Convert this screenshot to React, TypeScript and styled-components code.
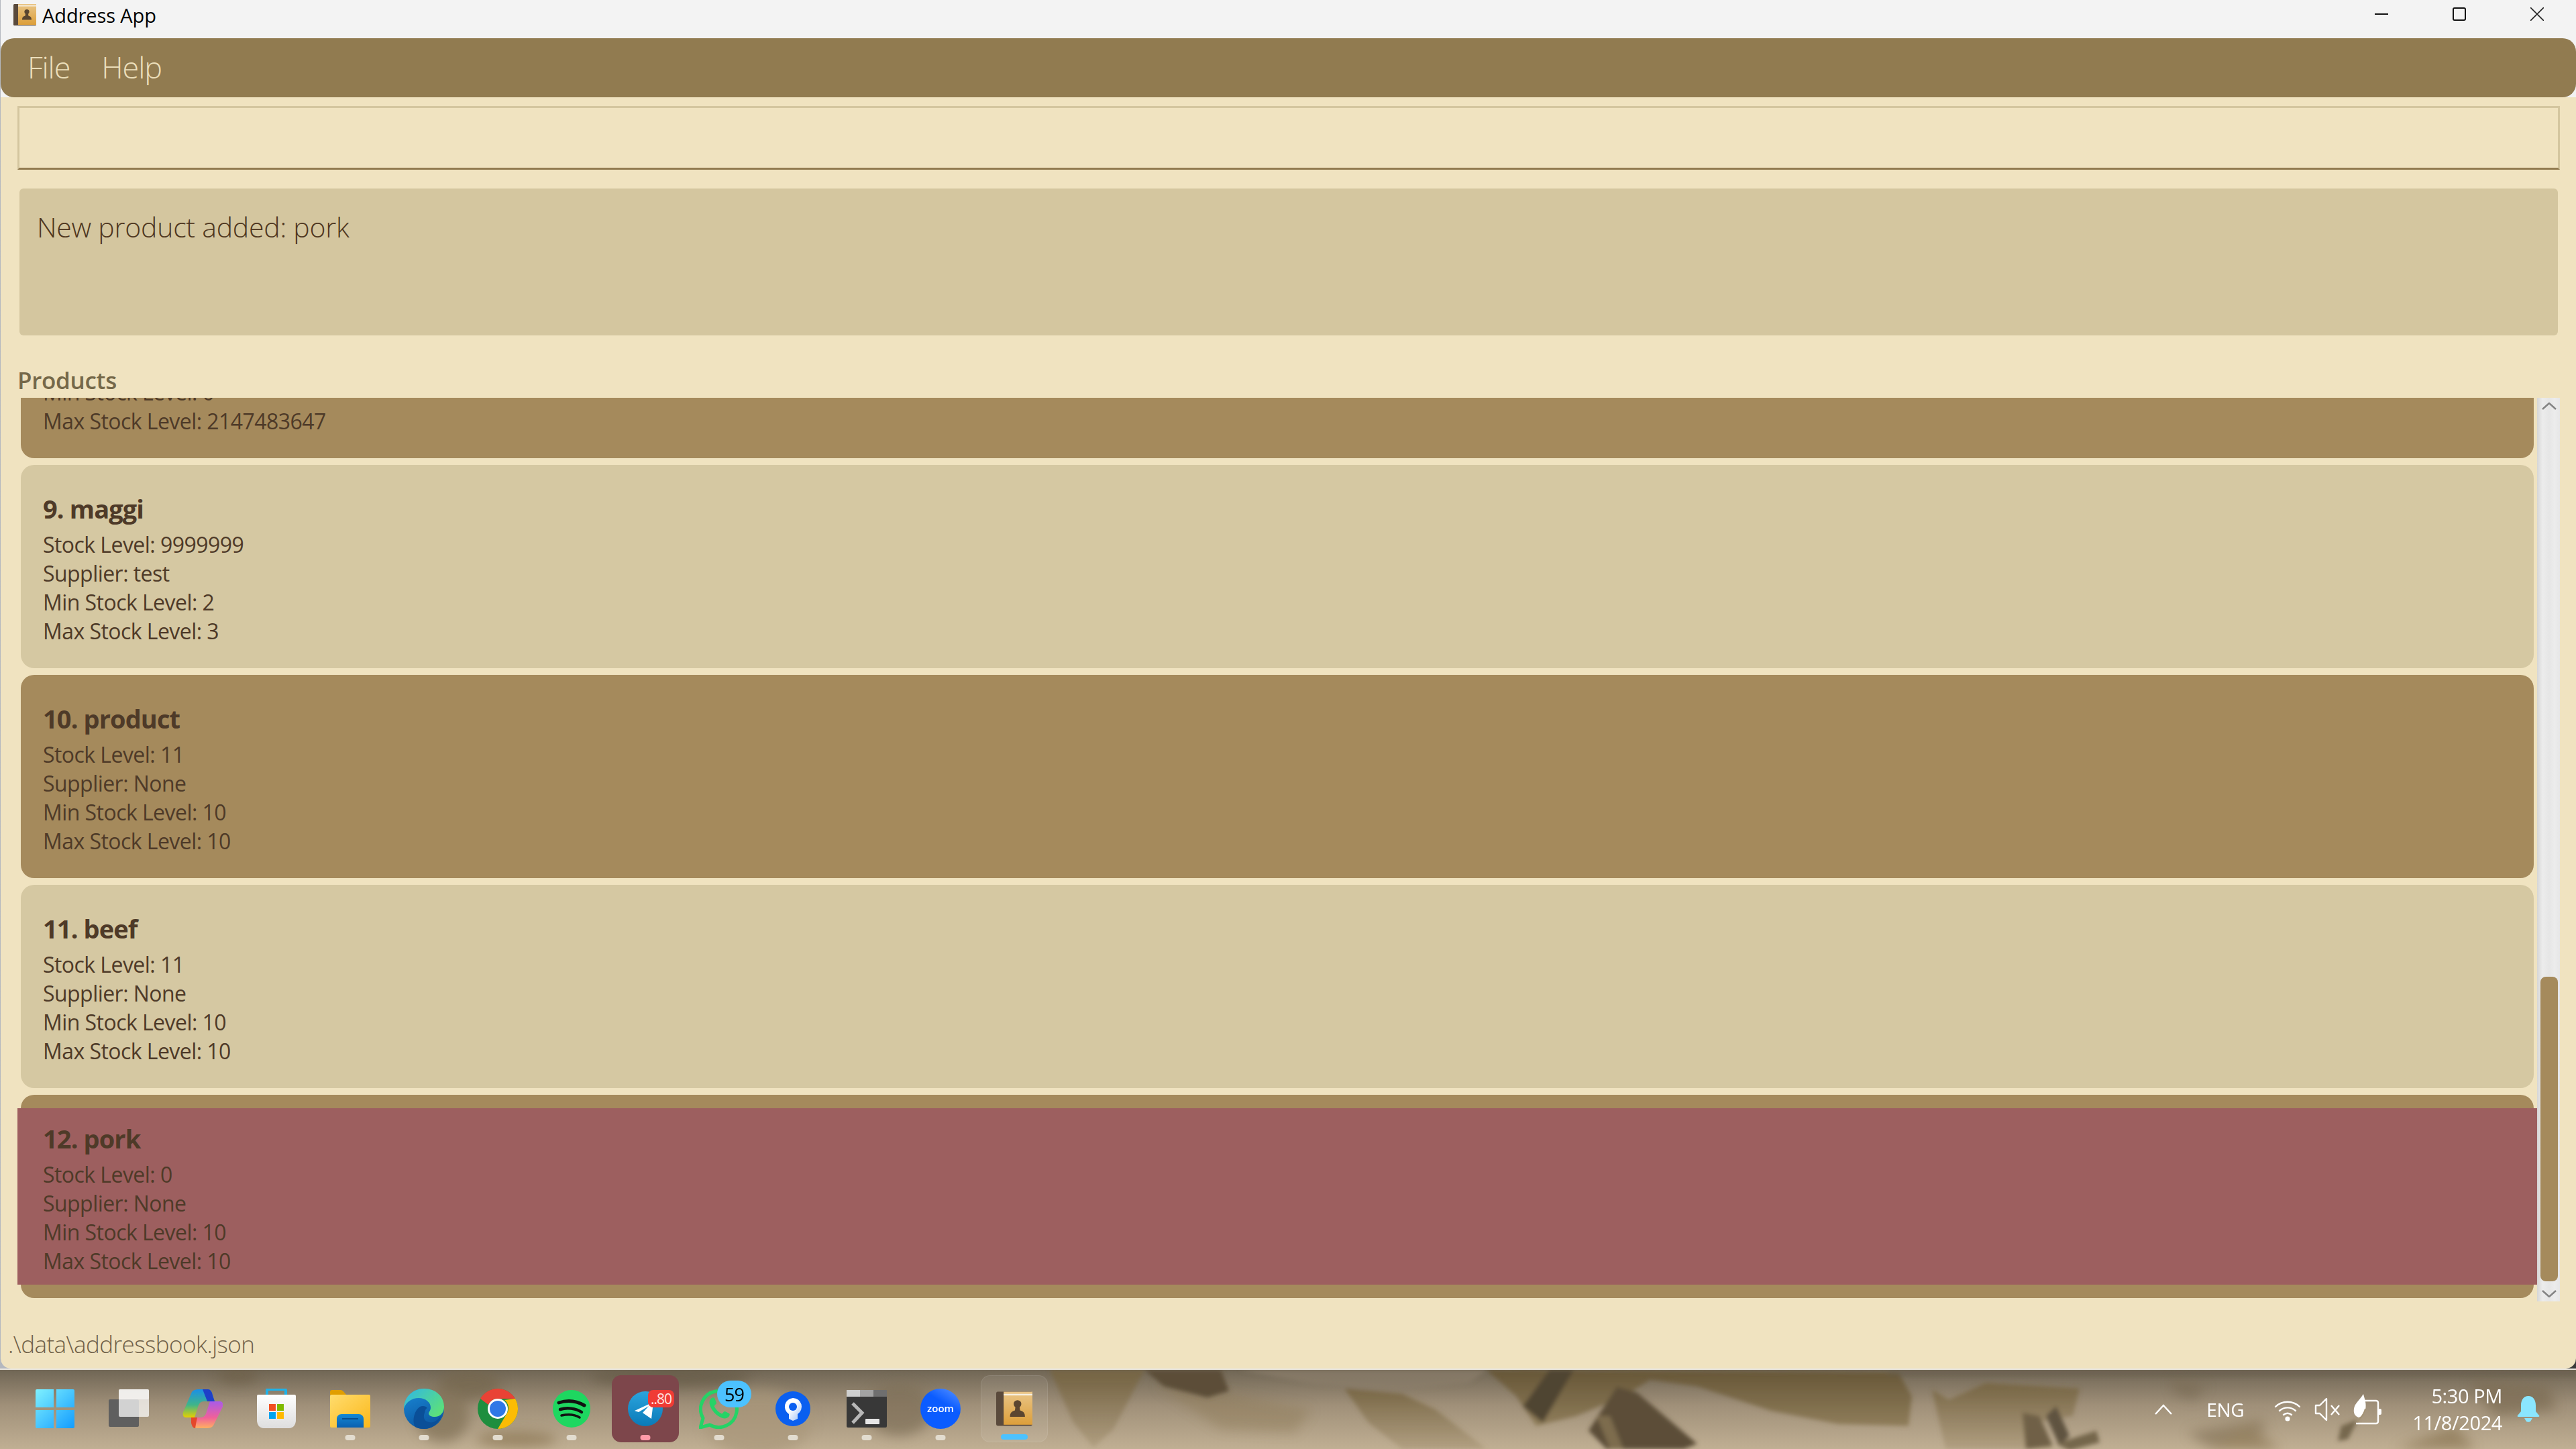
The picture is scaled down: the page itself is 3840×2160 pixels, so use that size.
import React from 'react';
import styled, {createGlobalStyle} from 'styled-components';

const GlobalStyle = createGlobalStyle`
  html, body {
    margin: 0;
    padding: 0;
    background: #3a3a3a;
  }
  * {
    box-sizing: border-box;
  }
`;

const FONT = `'Open Sans', 'Noto Sans', 'Liberation Sans', sans-serif`;

type Product = {
  name: string;
  stock: string;
  supplier: string;
  min: string;
  max: string;
};

const products: Product[] = [
  {name: '8. rice', stock: '50', supplier: 'None', min: '0', max: '2147483647'},
  {name: '9. maggi', stock: '9999999', supplier: 'test', min: '2', max: '3'},
  {name: '10. product', stock: '11', supplier: 'None', min: '10', max: '10'},
  {name: '11. beef', stock: '11', supplier: 'None', min: '10', max: '10'},
  {name: '12. pork', stock: '0', supplier: 'None', min: '10', max: '10'},
];

const Wallpaper = () => (
  <WallpaperSvg viewBox="0 0 3840 120" preserveAspectRatio="none">
    <defs>
      <linearGradient id="wallBase" x1="0" y1="0" x2="0" y2="1">
        <stop offset="0" stopColor="#706655" />
        <stop offset="0.45" stopColor="#a09079" />
        <stop offset="1" stopColor="#c0af93" />
      </linearGradient>
      <linearGradient id="fadeBrown" x1="0" y1="0" x2="0" y2="1">
        <stop offset="0" stopColor="#75633f" stopOpacity="0.85" />
        <stop offset="1" stopColor="#93805c" stopOpacity="0.3" />
      </linearGradient>
      <linearGradient id="fadeOlive" x1="0" y1="0" x2="0" y2="1">
        <stop offset="0" stopColor="#665637" />
        <stop offset="1" stopColor="#8f7d5a" />
      </linearGradient>
      <filter id="soft" x="-20%" y="-50%" width="140%" height="200%"><feGaussianBlur stdDeviation="9" /></filter>
      <filter id="softer" x="-20%" y="-50%" width="140%" height="200%"><feGaussianBlur stdDeviation="3" /></filter>
    </defs>
    <rect width="3840" height="120" fill="url(#wallBase)" />
    <g filter="url(#soft)" fill="#8a7653" opacity="0.7">
      <ellipse cx="355" cy="8" rx="30" ry="14" fill="#6e6048" />
      <ellipse cx="700" cy="22" rx="45" ry="24" fill="#75664d" />
      <ellipse cx="770" cy="105" rx="60" ry="12" />
      <ellipse cx="660" cy="70" rx="40" ry="40" fill="#7f6f55" />
      <ellipse cx="1130" cy="80" rx="80" ry="50" fill="#a9977a" />
      <ellipse cx="1340" cy="60" rx="50" ry="40" fill="#7d6e56" />
      <ellipse cx="1000" cy="10" rx="120" ry="16" fill="#665b47" />
      <polygon points="1722,22 1800,30 1955,60 1930,95 1820,90" opacity="0.6" />
      <polygon points="3680,15 3800,25 3810,60 3720,70" fill="#7b6c52" />
      <polygon points="3570,120 3660,85 3690,120" />
      <polygon points="3260,95 3370,75 3380,90 3290,115" fill="#85755a" />
      <polygon points="3290,120 3350,85 3400,120" />
      <polygon points="3240,10 3290,25 3270,45 3240,35" fill="#7a6c55" />
    </g>
    <g filter="url(#softer)">
      <polygon points="1565,0 1706,0 1660,90 1630,118 1600,80" fill="url(#fadeBrown)" />
      <polygon points="1706,0 1820,0 1832,32 1800,42 1735,25" fill="#5c4e38" />
      <polygon points="1847,0 2216,0 2190,20 2090,32 1960,22" fill="#8a7e6b" opacity="0.7" />
      <polygon points="2004,28 2090,36 2140,60 2216,120 2090,120 2040,80" fill="url(#fadeBrown)" />
      <polygon points="2216,0 2830,4 2850,40 2845,85 2740,82 2640,62 2530,25 2460,15 2420,40 2350,70 2290,85 2260,40" fill="url(#fadeOlive)" />
      <polygon points="2310,0 2346,0 2300,80 2270,55" fill="#4f4431" />
      <polygon points="2410,26 2440,34 2530,112 2510,120 2395,120 2368,92" fill="#5b4e38" />
      <polygon points="2380,70 2400,70 2420,120 2400,120" fill="#7d6c4e" />
      <polygon points="2880,30 2905,45 2960,20 3100,28 3090,70 3030,80 3060,120 2900,120" fill="url(#fadeBrown)" />
      <polygon points="2815,0 3840,0 3840,10 2815,10" fill="#635a4b" opacity="0.45" />
      <polygon points="3015,65 3040,70 3060,115 3020,120" fill="#6f6046" />
      <polygon points="3050,70 3065,55 3085,100 3070,115" fill="#5f5340" />
      <polygon points="3065,112 3125,92 3130,110 3085,122" fill="#75664c" />
      <polygon points="3490,85 3515,75 3500,105 3485,108" fill="#76684e" />
    </g>
  </WallpaperSvg>
);

const BookIcon = ({size}: {size: number}) => (
  <svg width={size} height={size} viewBox="0 0 34 34">
    <defs>
      <linearGradient id="bookFace" x1="0" y1="0" x2="0" y2="1">
        <stop offset="0" stopColor="#e9c587" />
        <stop offset="1" stopColor="#dd9f3a" />
      </linearGradient>
    </defs>
    <rect x="0" y="1" width="34" height="32" rx="1.5" fill="#5a4a3c" />
    <rect x="7" y="1" width="27" height="31" fill="url(#bookFace)" />
    <rect x="7" y="3" width="27" height="1.5" fill="#f6efe0" />
    <circle cx="20" cy="12.5" r="3.6" fill="#5b4630" />
    <path d="M18.2 14h3.6l.6 4.5c3 1 4.6 2 4.6 6H13c0-4 1.600-5 4.600-6z" fill="#5b4630" />
  </svg>
);

const StartIcon = () => (
  <svg width="58" height="58" viewBox="0 0 58 58">
    <defs>
      <linearGradient id="startGrad" x1="0" y1="0" x2="1" y2="1">
        <stop offset="0" stopColor="#7ff1ff" />
        <stop offset="1" stopColor="#129cff" />
      </linearGradient>
    </defs>
    <path
      d="M2 0h25v27H0V2a2 2 0 0 1 2-2zM31 0h25a2 2 0 0 1 2 2v25H31zM0 31h27v27H2a2 2 0 0 1-2-2zM31 31h27v25a2 2 0 0 1-2 2H31z"
      fill="url(#startGrad)"
    />
  </svg>
);

const TaskViewIcon = () => (
  <svg width="60" height="58" viewBox="0 0 60 58">
    <rect x="0" y="15" width="45" height="41" rx="2" fill="#5f5f5f" />
    <rect x="15" y="0" width="45" height="41" rx="2" fill="#fff" fillOpacity="0.72" />
    <rect x="15" y="0" width="45" height="15" rx="2" fill="#fff" fillOpacity="0.5" />
  </svg>
);

const CopilotIcon = () => (
  <svg width="60" height="58" viewBox="0 0 60 58">
    <defs>
      <linearGradient id="copA" x1="0" y1="0" x2="0" y2="1">
        <stop offset="0" stopColor="#1a8fe8" />
        <stop offset="0.55" stopColor="#3fb58a" />
        <stop offset="1" stopColor="#e6d000" />
      </linearGradient>
      <linearGradient id="copB" x1="0" y1="0" x2="0" y2="1">
        <stop offset="0" stopColor="#a95be8" />
        <stop offset="0.6" stopColor="#f0609a" />
        <stop offset="1" stopColor="#ffb060" />
      </linearGradient>
    </defs>
    <path d="M14 4c2-3 6-4 10-4h14c3 0 6 3 7 9l3 9H32c-6 0-8 4-10 12l-4 12H5c-4 0-5-4-4-8z" fill="url(#copA)" />
    <path d="M30 0h8c3 0 6 3 7 9l3 9H37z" fill="#1e40c8" />
    <path d="M46 54c-2 3-6 4-10 4H22c-3 0-6-3-7-9l-2-7h14c6 0 8-4 10-12l4-12h15c4 0 5 4 4 8z" fill="url(#copB)" />
    <path d="M13 42h9l-2 10 -1 6c-3 0-5-3-6-8z" fill="#e4472b" />
  </svg>
);

const StoreIcon = () => (
  <svg width="58" height="60" viewBox="0 0 58 60">
    <defs>
      <linearGradient id="bagGrad" x1="0" y1="0" x2="0" y2="1">
        <stop offset="0" stopColor="#ffffff" />
        <stop offset="1" stopColor="#dedede" />
      </linearGradient>
    </defs>
    <path d="M15 12V3a2 2 0 0 1 2-2h24a2 2 0 0 1 2 2v9" fill="none" stroke="#1eb2ea" strokeWidth="4" />
    <path d="M2 9h54a2 2 0 0 1 2 2v36c0 7-4 12-10 12H10C4 59 0 54 0 47V11a2 2 0 0 1 2-2z" fill="url(#bagGrad)" />
    <rect x="18" y="23" width="10" height="10" fill="#f25022" />
    <rect x="30" y="23" width="10" height="10" fill="#7fba00" />
    <rect x="18" y="35" width="10" height="10" fill="#00a4ef" />
    <rect x="30" y="35" width="10" height="10" fill="#ffb900" />
  </svg>
);

const ExplorerIcon = () => (
  <svg width="60" height="56" viewBox="0 0 60 56">
    <defs>
      <linearGradient id="folderGrad" x1="0" y1="0" x2="1" y2="1">
        <stop offset="0" stopColor="#ffdc6e" />
        <stop offset="1" stopColor="#fbb81a" />
      </linearGradient>
      <linearGradient id="folderTab" x1="0" y1="0" x2="0" y2="1">
        <stop offset="0" stopColor="#1488d4" />
        <stop offset="1" stopColor="#0860b0" />
      </linearGradient>
    </defs>
    <path d="M0 3a3 3 0 0 1 3-3h13c3 0 5 4 8 7h-24z" fill="#e09e00" />
    <rect x="0" y="7" width="60" height="49" rx="2" fill="url(#folderGrad)" />
    <path d="M10 56V43c0-4 3-7 7-7h26c4 0 7 3 7 7v13z" fill="url(#folderTab)" />
    <rect x="18" y="42" width="24" height="2" fill="#064d8e" />
  </svg>
);

const EdgeIcon = () => (
  <svg width="60" height="60" viewBox="0 0 60 60">
    <defs>
      <linearGradient id="edgeA" x1="0" y1="0" x2="1" y2="0.7">
        <stop offset="0" stopColor="#2fb6e8" />
        <stop offset="1" stopColor="#5ce07a" />
      </linearGradient>
      <linearGradient id="edgeB" x1="0" y1="0" x2="0.4" y2="1">
        <stop offset="0" stopColor="#1a8ad8" />
        <stop offset="1" stopColor="#0c59a4" />
      </linearGradient>
    </defs>
    <circle cx="30" cy="30" r="30" fill="url(#edgeB)" />
    <path d="M0 30C0 12 14 0 30 0c18 0 30 12 30 27 0 9-6 15-14 15-5 0-9-2-9-5 0-2 3-4 3-9 0-7-7-14-18-14C12 14 3 20 0 30z" fill="url(#edgeA)" />
    <path d="M31 36c-4 10 3 16 13 14 3-1 7-4 9-7l3-3c-5 14-15 20-26 20-6 0-10-1-13-3-5-8-2-24 7-30 4-2 9-1 11 2-3 1-3 4-4 7z" fill="#0a4f98" />
  </svg>
);

const ChromeIcon = () => (
  <svg width="60" height="60" viewBox="0 0 60 60">
    <circle cx="30" cy="30" r="30" fill="#1e8e3e" />
    <path d="M30 0a30 30 0 0 1 26 15H30a15 15 0 0 0-14 9L4 15A30 30 0 0 1 30 0z" fill="#e94235" />
    <path d="M56 15a30 30 0 0 1-26 45l13-22a15 15 0 0 0-3-21z" fill="#fbbc04" />
    <circle cx="30" cy="30" r="15" fill="#fff" />
    <circle cx="30" cy="30" r="12" fill="#2f78e6" />
  </svg>
);

const SpotifyIcon = () => (
  <svg width="56" height="56" viewBox="0 0 56 56">
    <circle cx="28" cy="28" r="28" fill="#1ed760" />
    <g fill="none" stroke="#111" strokeLinecap="round">
      <path d="M9 19c12-4 26-3 38 4" strokeWidth="5" />
      <path d="M11 29c10-3 23-2 32 4" strokeWidth="4.500" />
      <path d="M13 38c9-2 19-2 27 3" strokeWidth="3.500" />
    </g>
  </svg>
);

const TelegramIcon = () => (
  <svg width="52" height="52" viewBox="0 0 52 52">
    <defs>
      <linearGradient id="tgGrad" x1="0" y1="0" x2="0" y2="1">
        <stop offset="0" stopColor="#2aa4dd" />
        <stop offset="1" stopColor="#0a7ab8" />
      </linearGradient>
    </defs>
    <circle cx="26" cy="26" r="26" fill="url(#tgGrad)" />
    <path d="M10 29l28-13-3 25-13-9 9-10-15 9z" fill="#fff" />
  </svg>
);

const WhatsAppIcon = () => (
  <svg width="60" height="60" viewBox="0 0 60 60">
    <path
      d="M2 58l4-14A27 27 0 1 1 16 54z"
      fill="none"
      stroke="#25d366"
      strokeWidth="5"
      strokeLinejoin="round"
    />
    <path
      d="M19 14c-3 2-4 6-3 10 2 8 10 17 19 20 4 1 8 0 10-3 1-2 1-3 0-4l-6-3c-1 0-2 0-3 2-1 1-2 2-3 1-4-2-8-6-10-10 0-1 0-2 1-3 2-1 2-2 2-3l-3-7c-1-1-3-1-4 0z"
      fill="#25d366"
    />
  </svg>
);

const SourcetreeIcon = () => (
  <svg width="52" height="54" viewBox="0 0 52 54">
    <defs>
      <linearGradient id="keyGrad" x1="0" y1="0" x2="1" y2="1">
        <stop offset="0.4" stopColor="#fff" />
        <stop offset="1" stopColor="#9cc0f5" />
      </linearGradient>
    </defs>
    <circle cx="26" cy="27" r="26" fill="#0a5ff0" />
    <path d="M26 11a13 13 0 0 1 7 24v7l-7 3-6-3v-7a13 13 0 0 1 6-24z" fill="url(#keyGrad)" />
    <circle cx="26" cy="24" r="6" fill="#0a5ff0" />
  </svg>
);

const TerminalIcon = () => (
  <svg width="60" height="56" viewBox="0 0 60 56">
    <rect width="60" height="56" rx="2" fill="#383838" />
    <rect width="20" height="10" fill="#cfcfcf" />
    <rect x="20" width="20" height="10" fill="#a3a3a3" />
    <rect x="40" width="20" height="10" fill="#6f6f6f" />
    <path d="M9 20l14 14-14 15" fill="none" stroke="#b8b8b8" strokeWidth="5" />
    <rect x="28" y="43" width="21" height="8" rx="1" fill="#e6e6e6" />
  </svg>
);

const ZoomIcon = () => (
  <svg width="60" height="60" viewBox="0 0 60 60">
    <defs>
      <linearGradient id="zoomGrad" x1="1" y1="0" x2="0.4" y2="1">
        <stop offset="0" stopColor="#5b95ff" />
        <stop offset="0.45" stopColor="#0b5cff" />
        <stop offset="1" stopColor="#0b5cff" />
      </linearGradient>
    </defs>
    <circle cx="30" cy="30" r="30" fill="url(#zoomGrad)" />
    <text x="30" y="35" textAnchor="middle" fontFamily="'Open Sans', sans-serif" fontSize="15" fontWeight="600" fill="#fff">
      zoom
    </text>
  </svg>
);

const ChevronUpIcon = () => (
  <svg width="28" height="18" viewBox="0 0 28 18">
    <path d="M2 16L14 3l12 13" fill="none" stroke="#fff" strokeWidth="2.500" />
  </svg>
);

const WifiIcon = () => (
  <svg width="40" height="38" viewBox="0 0 40 38">
    <g fill="none" stroke="#fff" strokeWidth="2.400" strokeLinecap="round">
      <path d="M2 15a26 26 0 0 1 36 0" />
      <path d="M8 21a18 18 0 0 1 24 0" />
      <path d="M14 27a9 9 0 0 1 12 0" />
    </g>
    <circle cx="20" cy="33" r="3.600" fill="#fff" />
  </svg>
);

const MutedIcon = () => (
  <svg width="38" height="38" viewBox="0 0 38 38">
    <path d="M2 13h6l10-10v32L8 25H2z" fill="none" stroke="#fff" strokeWidth="2.400" strokeLinejoin="round" />
    <path d="M25 13l12 14M37 13L25 27" fill="none" stroke="#fff" strokeWidth="2.400" />
  </svg>
);

const BatteryIcon = () => (
  <svg width="42" height="46" viewBox="0 0 42 46">
    <path d="M12 10h22a3 3 0 0 1 3 3v28a3 3 0 0 1-3 3H4" fill="none" stroke="#fff" strokeWidth="2.400" />
    <rect x="37" y="22" width="5" height="9" rx="2" fill="#fff" />
    <path d="M15 0c2 8 5 14 3 24-1 5-5 9-10 11C2 33 0 28 1 22 2 14 9 10 15 0z" fill="#fff" />
    <path d="M6 42c3-5 10-10 12-20" fill="none" stroke="#a39274" strokeWidth="2" />
  </svg>
);

const BellIcon = () => (
  <svg width="34" height="40" viewBox="0 0 34 40">
    <path d="M17 0c7 0 11 6 11 14v9l5 6c1 1 0 2-1 2H2c-1 0-2-1-1-2l5-6v-9C6 6 10 0 17 0z" fill="#8ae6ff" />
    <path d="M11 33h12l-3 5c-1 1-5 1-6 0z" fill="#8ae6ff" />
  </svg>
);

const ArrowGlyph = ({up}: {up?: boolean}) => (
  <svg width="22" height="11" viewBox="0 0 22 11">
    <path d={up ? 'M1 10L11 1l10 9' : 'M1 1l10 9 10-9'} fill="none" stroke="#848484" strokeWidth="2.500" />
  </svg>
);

const WindowControls = () => (
  <Controls>
    <ControlButton>
      <svg width="20" height="20" viewBox="0 0 20 20">
        <rect x="0" y="9" width="20" height="2" fill="#111" />
      </svg>
    </ControlButton>
    <ControlButton>
      <svg width="20" height="20" viewBox="0 0 20 20">
        <rect x="1" y="1" width="18" height="18" rx="2" fill="none" stroke="#111" strokeWidth="2" />
      </svg>
    </ControlButton>
    <ControlButton>
      <svg width="20" height="20" viewBox="0 0 20 20">
        <path d="M0 0l20 20M20 0L0 20" stroke="#222" strokeWidth="1.600" />
      </svg>
    </ControlButton>
  </Controls>
);

const ProductCard = ({product, index, selected}: {product: Product; index: number; selected: boolean}) => (
  <Card $odd={index % 2 === 0}>
    <CardBody $selected={selected}>
      <CardTitle>{product.name}</CardTitle>
      <CardLines>
        <CardLine>Stock Level: {product.stock}</CardLine>
        <CardLine>Supplier: {product.supplier}</CardLine>
        <CardLine>Min Stock Level: {product.min}</CardLine>
        <CardLine>Max Stock Level: {product.max}</CardLine>
      </CardLines>
    </CardBody>
  </Card>
);

const App = () => {
  return (
    <Page>
      <GlobalStyle />
      <AppWindow>
        <Header>
          <TitleBar>
            <TitleLeft>
              <BookIcon size={34} />
              <TitleText>Address App</TitleText>
            </TitleLeft>
            <WindowControls />
          </TitleBar>
          <MenuBar>
            <MenuItem>File</MenuItem>
            <MenuItem>Help</MenuItem>
          </MenuBar>
        </Header>
        <CommandBox />
        <ResultBox>New product added: pork</ResultBox>
        <ListLabel>Products</ListLabel>
        <ListRow>
          <ListView>
            {products.map((product, index) => (
              <ProductCard
                key={product.name}
                product={product}
                index={index}
                selected={index === products.length - 1}
              />
            ))}
          </ListView>
          <ScrollBar>
            <ScrollArrow $up>
              <ArrowGlyph up />
            </ScrollArrow>
            <ScrollThumb />
            <ScrollArrow>
              <ArrowGlyph />
            </ScrollArrow>
          </ScrollBar>
        </ListRow>
        <StatusBar>.\data\addressbook.json</StatusBar>
      </AppWindow>
      <TaskBar>
        <Wallpaper />
        <TaskIcons>
          <TaskSlot><StartIcon /></TaskSlot>
          <TaskSlot><TaskViewIcon /></TaskSlot>
          <TaskSlot><CopilotIcon /></TaskSlot>
          <TaskSlot><StoreIcon /></TaskSlot>
          <TaskSlot><ExplorerIcon /><Indicator /></TaskSlot>
          <TaskSlot><EdgeIcon /><Indicator /></TaskSlot>
          <TaskSlot><ChromeIcon /><Indicator /></TaskSlot>
          <TaskSlot><SpotifyIcon /><Indicator /></TaskSlot>
          <TaskSlot $variant="alert">
            <TelegramIcon />
            <TelegramBadge>..80</TelegramBadge>
            <Indicator $color="#ff9aa8" />
          </TaskSlot>
          <TaskSlot>
            <WhatsAppIcon />
            <WhatsAppBadge>59</WhatsAppBadge>
            <Indicator />
          </TaskSlot>
          <TaskSlot><SourcetreeIcon /><Indicator /></TaskSlot>
          <TaskSlot><TerminalIcon /><Indicator /></TaskSlot>
          <TaskSlot><ZoomIcon /><Indicator /></TaskSlot>
          <TaskSlot $variant="active">
            <BookIcon size={54} />
            <Indicator $color="#4cc2ff" $wide />
          </TaskSlot>
        </TaskIcons>
        <Tray>
          <ChevronUpIcon />
          <Lang>ENG</Lang>
          <TrayIcons>
            <WifiIcon />
            <MutedIcon />
            <BatteryIcon />
          </TrayIcons>
          <Clock>
            <span>5:30 PM</span>
            <span>11/8/2024</span>
          </Clock>
          <BellIcon />
        </Tray>
      </TaskBar>
    </Page>
  );
};

export default App;

const Page = styled.div`
  width: 3840px;
  height: 2160px;
  display: flex;
  flex-direction: column;
  overflow: hidden;
  background: linear-gradient(90deg, #b4b8bf, #3a3a3a);
  font-family: ${FONT};
`;

const AppWindow = styled.div`
  height: 2040px;
  margin-left: 1px;
  display: flex;
  flex-direction: column;
  background: #f0e3c0;
  border-radius: 0 0 15px 15px;
  overflow: hidden;
`;

const Header = styled.header`
  background: #f3f3f3;
`;

const TitleBar = styled.div`
  height: 57px;
  display: flex;
  align-items: flex-start;
  justify-content: space-between;
  padding-left: 19px;
`;

const TitleLeft = styled.div`
  display: flex;
  align-items: center;
  gap: 9px;
  height: 44px;
`;

const TitleText = styled.span`
  font-size: 29px;
  color: #000;
  letter-spacing: -0.1px;
`;

const Controls = styled.div`
  display: flex;
`;

const ControlButton = styled.div`
  width: 116px;
  height: 42px;
  display: flex;
  align-items: center;
  justify-content: center;
`;

const MenuBar = styled.nav`
  height: 88px;
  display: flex;
  align-items: center;
  gap: 47px;
  padding: 0 0 4px 40px;
  background: #917b50;
  border-radius: 20px;
`;

const MenuItem = styled.span`
  font-size: 45px;
  font-weight: 300;
  color: #ecdfbb;
  letter-spacing: -1.1px;
`;

const CommandBox = styled.div`
  height: 95px;
  margin: 13px 24px 0 25px;
  background: #f0e3c0;
  border: 3px solid #d4c69f;
  border-bottom: 3px solid #917b50;
`;

const ResultBox = styled.div`
  height: 219px;
  margin: 28px 27px 0 28px;
  padding: 28px 26px;
  background: #d4c69f;
  border-radius: 6px;
  font-size: 41px;
  line-height: 58px;
  font-weight: 300;
  color: #4e3620;
  letter-spacing: -0.25px;
`;

const ListLabel = styled.div`
  margin: 43px 0 0 25px;
  height: 50px;
  line-height: 47px;
  font-size: 35px;
  font-weight: 600;
  color: #756849;
  letter-spacing: -0.3px;
`;

const ListRow = styled.div`
  height: 1347px;
  margin: 0 24px 0 25px;
  display: flex;
`;

const ListView = styled.div`
  flex: 1;
  min-width: 0;
  display: flex;
  flex-direction: column;
  justify-content: flex-end;
  gap: 10px;
  padding: 0 5px 5px;
  overflow: hidden;
`;

const Card = styled.article<{$odd: boolean}>`
  flex: 0 0 303px;
  padding: 20px 0;
  background: ${({$odd}) => ($odd ? '#a58a5c' : '#d5c8a2')};
  border-radius: 20px;
`;

const CardBody = styled.div<{$selected: boolean}>`
  height: 263px;
  margin: 0 -5px;
  padding: 20px 0 0 38px;
  background: ${({$selected}) => ($selected ? '#9d5f5f' : 'transparent')};
  color: #4e3a28;
`;

const CardTitle = styled.div`
  height: 50px;
  line-height: 50px;
  font-size: 38px;
  font-weight: 700;
  letter-spacing: -0.9px;
`;

const CardLines = styled.div`
  margin-top: 7px;
`;

const CardLine = styled.div`
  height: 43px;
  line-height: 43px;
  font-size: 32px;
  letter-spacing: -0.55px;
`;

const ScrollBar = styled.div`
  flex: 0 0 34px;
  display: flex;
  flex-direction: column;
  padding-left: 5px;
  background: linear-gradient(90deg, #d6d6d6, #ececec 8px, #e6e6e6 18px, #ececec 26px, #e6e6e6);
`;

const ScrollArrow = styled.div<{$up?: boolean}>`
  height: 30px;
  width: 26px;
  display: flex;
  align-items: center;
  justify-content: center;
  flex-shrink: 0;
  padding-${({$up}) => ($up ? 'bottom' : 'top')}: 6px;
`;

const ScrollThumb = styled.div`
  width: 26px;
  height: 454px;
  margin-top: auto;
  background: #a58a5c;
  border-radius: 8px;
`;

const StatusBar = styled.footer`
  flex: 1;
  display: flex;
  align-items: flex-end;
  padding: 0 0 11px 11px;
  font-size: 35px;
  line-height: 50px;
  font-weight: 300;
  color: #6f6048;
  letter-spacing: -0.55px;
`;

const TaskBar = styled.div`
  position: relative;
  height: 120px;
  display: flex;
  justify-content: space-between;
  border-top: 2px solid #e9e6df;
`;

const WallpaperSvg = styled.svg`
  position: absolute;
  inset: 0;
  width: 100%;
  height: 100%;
`;

const TaskIcons = styled.div`
  position: relative;
  display: flex;
  gap: 10px;
  padding: 8px 0 0 32px;
`;

const TaskSlot = styled.div<{$variant?: 'alert' | 'active'}>`
  position: relative;
  width: 100px;
  height: 100px;
  display: flex;
  align-items: center;
  justify-content: center;
  border-radius: 14px;
  background: ${({$variant}) =>
    $variant === 'alert' ? '#7d464b' : $variant === 'active' ? 'rgba(255, 255, 255, 0.07)' : 'transparent'};
  border: ${({$variant}) => ($variant === 'active' ? '1px solid rgba(255, 255, 255, 0.09)' : 'none')};
`;

const Indicator = styled.span<{$color?: string; $wide?: boolean}>`
  position: absolute;
  left: 50%;
  bottom: 3px;
  width: ${({$wide}) => ($wide ? '40px' : '15px')};
  height: 8px;
  transform: translateX(-50%);
  border-radius: 4px;
  background: ${({$color}) => $color ?? '#e2dccf'};
`;

const TelegramBadge = styled.span`
  position: absolute;
  top: 22px;
  right: 7px;
  width: 39px;
  height: 26px;
  display: flex;
  align-items: center;
  justify-content: center;
  border-radius: 8px;
  background: #f03b35;
  color: #ffe4e0;
  font-size: 21px;
  letter-spacing: -1px;
`;

const WhatsAppBadge = styled.span`
  position: absolute;
  top: 8px;
  right: 2px;
  width: 51px;
  height: 40px;
  display: flex;
  align-items: center;
  justify-content: center;
  border-radius: 20px;
  background: #4cc2ff;
  color: #000;
  font-size: 27px;
  letter-spacing: -1px;
`;

const Tray = styled.div`
  position: relative;
  display: flex;
  align-items: center;
  padding: 0 54px 0 0;
  color: #fff;
`;

const Lang = styled.span`
  margin-left: 50px;
  font-size: 28px;
  letter-spacing: -0.3px;
`;

const TrayIcons = styled.div`
  display: flex;
  align-items: center;
  gap: 20px;
  margin-left: 45px;
`;

const Clock = styled.div`
  display: flex;
  flex-direction: column;
  align-items: flex-end;
  margin: 0 22px 0 46px;
  font-size: 29px;
  line-height: 40px;
  letter-spacing: -0.4px;
`;
